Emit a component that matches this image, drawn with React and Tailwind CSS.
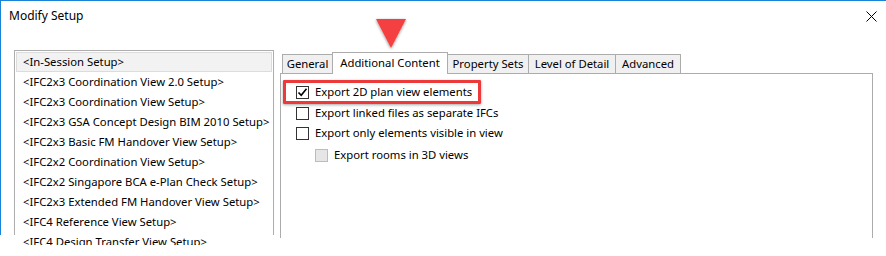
import React from 'react'

const setups = [
  '<In-Session Setup>',
  '<IFC2x3 Coordination View 2.0 Setup>',
  '<IFC2x3 Coordination View Setup>',
  '<IFC2x3 GSA Concept Design BIM 2010 Setup>',
  '<IFC2x3 Basic FM Handover View Setup>',
  '<IFC2x2 Coordination View Setup>',
  '<IFC2x2 Singapore BCA e-Plan Check Setup>',
  '<IFC2x3 Extended FM Handover View Setup>',
  '<IFC4 Reference View Setup>',
  '<IFC4 Design Transfer View Setup>'
]

const tabs = [
  { label: 'General', w: 'w-[51px]' },
  { label: 'Additional Content', w: 'w-[116px]', active: true },
  { label: 'Property Sets', w: 'w-[82px]' },
  { label: 'Level of Detail', w: 'w-[88px]' },
  { label: 'Advanced', w: 'w-[66px]' }
]

function Checkbox({ checked, disabled }) {
  return (
    <div
      className={
        disabled
          ? 'w-[13px] h-[13px] border border-[#bcbcbc] bg-[#e6e6e6] shrink-0'
          : 'w-[13px] h-[13px] border border-[#333333] bg-white shrink-0 flex items-center justify-center'
      }
    >
      {checked && (
        <svg width="11" height="11" viewBox="0 0 11 11">
          <path d="M1.5 5.5 L4.2 8.3 L9.5 1.8" fill="none" stroke="#000" strokeWidth="1.6" />
        </svg>
      )}
    </div>
  )
}

function Option({ label, checked, disabled, className }) {
  return (
    <div className={'flex items-center gap-[6px] ' + className}>
      <Checkbox checked={checked} disabled={disabled} />
      <span className="text-black whitespace-nowrap">{label}</span>
    </div>
  )
}

export default function App() {
  return (
    <div className="w-[886px] h-[256px] bg-white relative overflow-hidden font-['Noto_Sans','Open_Sans',sans-serif] text-[11.3px] text-black">
      <div className="h-[245px] overflow-hidden border-t border-[#1883d7]">
        <div className="h-[234px] border-l border-[#1883d7]">
          {/* title bar */}
          <div className="h-[30px] flex items-center justify-between pl-[8px] pr-[9px]">
            <span className="text-[12px]">Modify Setup</span>
            <svg width="11" height="11" viewBox="0 0 11 11">
              <path d="M0.5 0.5 L10.5 10.5 M10.5 0.5 L0.5 10.5" stroke="#000" strokeWidth="1" />
            </svg>
          </div>

          <div className="flex pt-[19px] pl-[13px]">
            {/* setup list */}
            <div className="w-[260px] h-[185px] border-t border-l border-r border-[#adadad] pt-[1px]">
              {setups.map((s, i) =>
                i === 0 ? (
                  <div key={s} className="h-[20px] mx-[1px] flex items-center pl-[6px] bg-[#f2f2f2] border border-[#dcdcdc] whitespace-nowrap">
                    {s}
                  </div>
                ) : (
                  <div key={s} className="h-[20px] flex items-center pl-[8px] whitespace-nowrap">
                    {s}
                  </div>
                )
              )}
            </div>

            {/* tabs */}
            <div className="ml-[6px] pt-[2px] flex flex-col">
              <div className="flex items-end h-[21px] pl-[2px]">
                {tabs.map(t =>
                  t.active ? (
                    <div key={t.label} className={t.w + ' h-[22px] -mb-[1px] -ml-[1px] relative z-10 bg-white border-t border-l border-r border-[#acacac] flex items-center justify-center pb-[1px]'}>
                      {t.label}
                    </div>
                  ) : (
                    <div key={t.label} className={t.w + ' h-[19px] -ml-[1px] first:ml-0 bg-[#f0f0f0] border-t border-l border-r border-[#acacac] flex items-center justify-center'}>
                      {t.label}
                    </div>
                  )
                )}
              </div>
              <div className="w-[593px] h-[165px] border-t border-l border-r border-[#acacac] pt-[8px] pl-[15px] relative">
                <Option label="Export 2D plan view elements" checked className="h-[21px]" />
                <Option label="Export linked files as separate IFCs" className="h-[20px]" />
                <Option label="Export only elements visible in view" className="h-[20px]" />
                <Option label="Export rooms in 3D views" disabled className="h-[21px] mt-[2px] ml-[19px]" />

                {/* highlight annotation */}
                <div className="absolute left-[2px] top-[6px] w-[198px] h-[24px] border-[3px] border-[#ec3a3b] rounded-[1px] shadow-[0_1px_3px_rgba(0,0,0,0.35)]" />
              </div>
            </div>
          </div>
        </div>
      </div>

      {/* arrow annotation */}
      <svg className="absolute left-[371px] top-[15px]" width="40" height="40" viewBox="0 0 40 40">
        <defs>
          <filter id="sh" x="-30%" y="-30%" width="160%" height="160%">
            <feDropShadow dx="0" dy="1" stdDeviation="1.5" floodColor="#000" floodOpacity="0.45" />
          </filter>
        </defs>
        <polygon points="5,4 35,4 20,33" fill="#f4403f" filter="url(#sh)" />
      </svg>
    </div>
  )
}
